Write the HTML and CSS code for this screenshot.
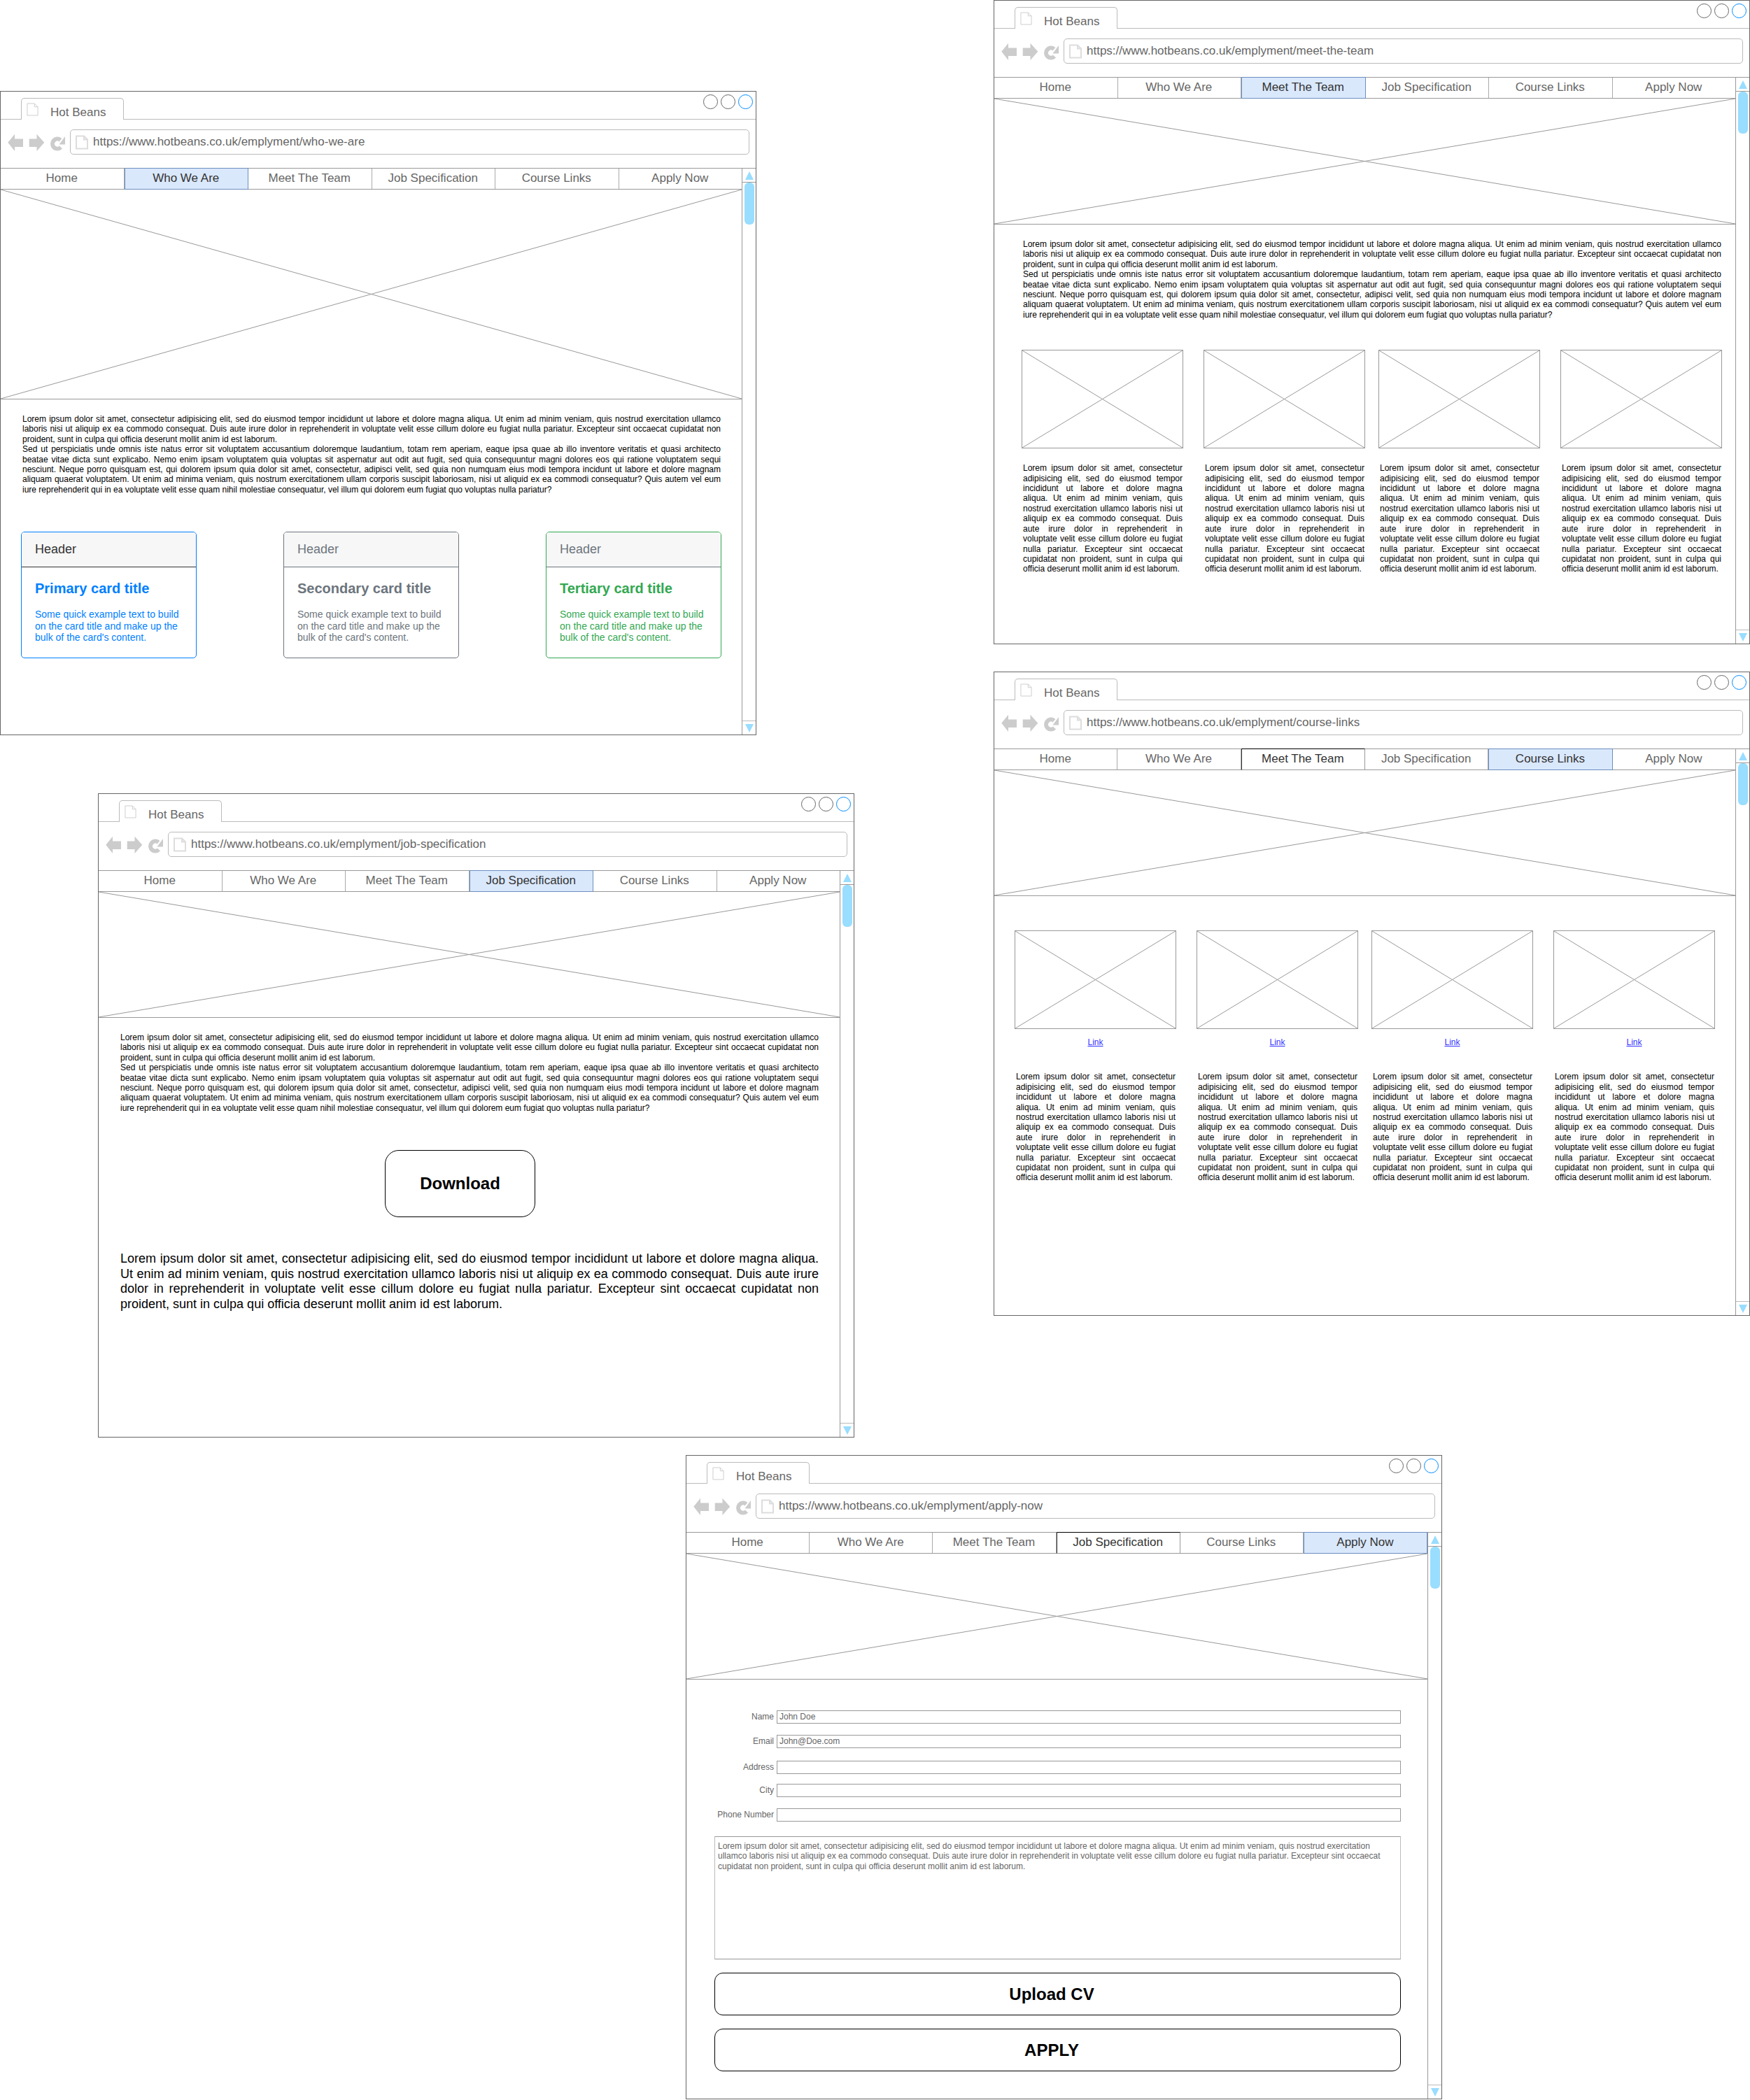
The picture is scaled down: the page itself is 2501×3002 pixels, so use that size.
FILE: index.html
```html
<!DOCTYPE html>
<html lang="en">
<head>
    <meta charset="UTF-8">
    <title>Hot Beans wireframes</title>
    <link rel="stylesheet" href="styles.css">
</head>
<body>
    <svg class="icon-defs" aria-hidden="true">
        <symbol id="nav-icons" viewBox="0 0 85 36">
            <path d="M1.3 18.8 11 6.7V13.5H23V25H11V31Z"/>
            <path d="M53.3 18.8 42.5 6.7V13.5H31.7V25H42.5V31Z"/>
            <path class="reload" d="M76.5 15.2A7 7 0 1 0 77 25.5"/>
            <path d="M83 10V21.5H74.5Z"/>
        </symbol>
        <symbol id="page" viewBox="0 0 18 20">
            <path d="M1 1H12L17 6V19H1Z M12 1V6H17"/>
        </symbol>
        <symbol id="cross" viewBox="0 0 100 100" preserveAspectRatio="none">
            <path d="M0 0 100 100M0 100 100 0" vector-effect="non-scaling-stroke"/>
        </symbol>
    </svg>

    <main class="desk">

        <!-- who we are -->
        <section class="window win-who">
            <div class="tab-row">
                <div class="tab"><svg class="tab-icon"><use href="#page"/></svg><span>Hot Beans</span></div>
                <div class="controls"><i></i><i></i><i class="on"></i></div>
            </div>
            <div class="toolbar">
                <svg class="nav-icons"><use href="#nav-icons"/></svg>
                <div class="address"><svg class="addr-icon"><use href="#page"/></svg>https://www.hotbeans.co.uk/emplyment/who-we-are</div>
            </div>
            <div class="frame">
                <div class="page">
                    <nav class="menu">
                        <a>Home</a><a class="active">Who We Are</a><a>Meet The Team</a><a>Job Specification</a><a>Course Links</a><a>Apply Now</a>
                    </nav>
                    <svg class="hero hero-tall"><use href="#cross"/></svg>
                    <div class="copy">
                        <p>Lorem ipsum dolor sit amet, consectetur adipisicing elit, sed do eiusmod tempor incididunt ut labore et dolore magna aliqua. Ut enim ad minim veniam, quis nostrud exercitation ullamco laboris nisi ut aliquip ex ea commodo consequat. Duis aute irure dolor in reprehenderit in voluptate velit esse cillum dolore eu fugiat nulla pariatur. Excepteur sint occaecat cupidatat non proident, sunt in culpa qui officia deserunt mollit anim id est laborum.</p>
                        <p>Sed ut perspiciatis unde omnis iste natus error sit voluptatem accusantium doloremque laudantium, totam rem aperiam, eaque ipsa quae ab illo inventore veritatis et quasi architecto beatae vitae dicta sunt explicabo. Nemo enim ipsam voluptatem quia voluptas sit aspernatur aut odit aut fugit, sed quia consequuntur magni dolores eos qui ratione voluptatem sequi nesciunt. Neque porro quisquam est, qui dolorem ipsum quia dolor sit amet, consectetur, adipisci velit, sed quia non numquam eius modi tempora incidunt ut labore et dolore magnam aliquam quaerat voluptatem. Ut enim ad minima veniam, quis nostrum exercitationem ullam corporis suscipit laboriosam, nisi ut aliquid ex ea commodi consequatur? Quis autem vel eum iure reprehenderit qui in ea voluptate velit esse quam nihil molestiae consequatur, vel illum qui dolorem eum fugiat quo voluptas nulla pariatur?</p>
                    </div>
                    <div class="cards">
                        <div class="card card-primary">
                            <div class="card-header">Header</div>
                            <div class="card-body">
                                <h4>Primary card title</h4>
                                <p>Some quick example text to build on the card title and make up the bulk of the card's content.</p>
                            </div>
                        </div>
                        <div class="card card-secondary">
                            <div class="card-header">Header</div>
                            <div class="card-body">
                                <h4>Secondary card title</h4>
                                <p>Some quick example text to build on the card title and make up the bulk of the card's content.</p>
                            </div>
                        </div>
                        <div class="card card-tertiary">
                            <div class="card-header">Header</div>
                            <div class="card-body">
                                <h4>Tertiary card title</h4>
                                <p>Some quick example text to build on the card title and make up the bulk of the card's content.</p>
                            </div>
                        </div>
                    </div>
                </div>
                <div class="scrollbar"><div class="scroll-up"><b></b></div><div class="thumb"></div><div class="scroll-down"><b></b></div></div>
            </div>
        </section>

        <!-- meet the team -->
        <section class="window win-team">
            <div class="tab-row">
                <div class="tab"><svg class="tab-icon"><use href="#page"/></svg><span>Hot Beans</span></div>
                <div class="controls"><i></i><i></i><i class="on"></i></div>
            </div>
            <div class="toolbar">
                <svg class="nav-icons"><use href="#nav-icons"/></svg>
                <div class="address"><svg class="addr-icon"><use href="#page"/></svg>https://www.hotbeans.co.uk/emplyment/meet-the-team</div>
            </div>
            <div class="frame">
                <div class="page">
                    <nav class="menu">
                        <a>Home</a><a>Who We Are</a><a class="active">Meet The Team</a><a>Job Specification</a><a>Course Links</a><a>Apply Now</a>
                    </nav>
                    <svg class="hero"><use href="#cross"/></svg>
                    <div class="copy">
                        <p>Lorem ipsum dolor sit amet, consectetur adipisicing elit, sed do eiusmod tempor incididunt ut labore et dolore magna aliqua. Ut enim ad minim veniam, quis nostrud exercitation ullamco laboris nisi ut aliquip ex ea commodo consequat. Duis aute irure dolor in reprehenderit in voluptate velit esse cillum dolore eu fugiat nulla pariatur. Excepteur sint occaecat cupidatat non proident, sunt in culpa qui officia deserunt mollit anim id est laborum.</p>
                        <p>Sed ut perspiciatis unde omnis iste natus error sit voluptatem accusantium doloremque laudantium, totam rem aperiam, eaque ipsa quae ab illo inventore veritatis et quasi architecto beatae vitae dicta sunt explicabo. Nemo enim ipsam voluptatem quia voluptas sit aspernatur aut odit aut fugit, sed quia consequuntur magni dolores eos qui ratione voluptatem sequi nesciunt. Neque porro quisquam est, qui dolorem ipsum quia dolor sit amet, consectetur, adipisci velit, sed quia non numquam eius modi tempora incidunt ut labore et dolore magnam aliquam quaerat voluptatem. Ut enim ad minima veniam, quis nostrum exercitationem ullam corporis suscipit laboriosam, nisi ut aliquid ex ea commodi consequatur? Quis autem vel eum iure reprehenderit qui in ea voluptate velit esse quam nihil molestiae consequatur, vel illum qui dolorem eum fugiat quo voluptas nulla pariatur?</p>
                    </div>
                    <div class="columns columns-team">
                        <div class="column"><svg class="thumb-img"><use href="#cross"/></svg><p>Lorem ipsum dolor sit amet, consectetur adipisicing elit, sed do eiusmod tempor incididunt ut labore et dolore magna aliqua. Ut enim ad minim veniam, quis nostrud exercitation ullamco laboris nisi ut aliquip ex ea commodo consequat. Duis aute irure dolor in reprehenderit in voluptate velit esse cillum dolore eu fugiat nulla pariatur. Excepteur sint occaecat cupidatat non proident, sunt in culpa qui officia deserunt mollit anim id est laborum.</p></div>
                        <div class="column"><svg class="thumb-img"><use href="#cross"/></svg><p>Lorem ipsum dolor sit amet, consectetur adipisicing elit, sed do eiusmod tempor incididunt ut labore et dolore magna aliqua. Ut enim ad minim veniam, quis nostrud exercitation ullamco laboris nisi ut aliquip ex ea commodo consequat. Duis aute irure dolor in reprehenderit in voluptate velit esse cillum dolore eu fugiat nulla pariatur. Excepteur sint occaecat cupidatat non proident, sunt in culpa qui officia deserunt mollit anim id est laborum.</p></div>
                        <div class="column"><svg class="thumb-img"><use href="#cross"/></svg><p>Lorem ipsum dolor sit amet, consectetur adipisicing elit, sed do eiusmod tempor incididunt ut labore et dolore magna aliqua. Ut enim ad minim veniam, quis nostrud exercitation ullamco laboris nisi ut aliquip ex ea commodo consequat. Duis aute irure dolor in reprehenderit in voluptate velit esse cillum dolore eu fugiat nulla pariatur. Excepteur sint occaecat cupidatat non proident, sunt in culpa qui officia deserunt mollit anim id est laborum.</p></div>
                        <div class="column"><svg class="thumb-img"><use href="#cross"/></svg><p>Lorem ipsum dolor sit amet, consectetur adipisicing elit, sed do eiusmod tempor incididunt ut labore et dolore magna aliqua. Ut enim ad minim veniam, quis nostrud exercitation ullamco laboris nisi ut aliquip ex ea commodo consequat. Duis aute irure dolor in reprehenderit in voluptate velit esse cillum dolore eu fugiat nulla pariatur. Excepteur sint occaecat cupidatat non proident, sunt in culpa qui officia deserunt mollit anim id est laborum.</p></div>
                    </div>
                </div>
                <div class="scrollbar"><div class="scroll-up"><b></b></div><div class="thumb"></div><div class="scroll-down"><b></b></div></div>
            </div>
        </section>

        <!-- course links -->
        <section class="window win-links">
            <div class="tab-row">
                <div class="tab"><svg class="tab-icon"><use href="#page"/></svg><span>Hot Beans</span></div>
                <div class="controls"><i></i><i></i><i class="on"></i></div>
            </div>
            <div class="toolbar">
                <svg class="nav-icons"><use href="#nav-icons"/></svg>
                <div class="address"><svg class="addr-icon"><use href="#page"/></svg>https://www.hotbeans.co.uk/emplyment/course-links</div>
            </div>
            <div class="frame">
                <div class="page">
                    <nav class="menu">
                        <a>Home</a><a>Who We Are</a><a class="picked">Meet The Team</a><a>Job Specification</a><a class="active">Course Links</a><a>Apply Now</a>
                    </nav>
                    <svg class="hero"><use href="#cross"/></svg>
                    <div class="columns columns-links">
                        <div class="column"><svg class="thumb-img"><use href="#cross"/></svg><a class="course-link" href="#">Link</a><p>Lorem ipsum dolor sit amet, consectetur adipisicing elit, sed do eiusmod tempor incididunt ut labore et dolore magna aliqua. Ut enim ad minim veniam, quis nostrud exercitation ullamco laboris nisi ut aliquip ex ea commodo consequat. Duis aute irure dolor in reprehenderit in voluptate velit esse cillum dolore eu fugiat nulla pariatur. Excepteur sint occaecat cupidatat non proident, sunt in culpa qui officia deserunt mollit anim id est laborum.</p></div>
                        <div class="column"><svg class="thumb-img"><use href="#cross"/></svg><a class="course-link" href="#">Link</a><p>Lorem ipsum dolor sit amet, consectetur adipisicing elit, sed do eiusmod tempor incididunt ut labore et dolore magna aliqua. Ut enim ad minim veniam, quis nostrud exercitation ullamco laboris nisi ut aliquip ex ea commodo consequat. Duis aute irure dolor in reprehenderit in voluptate velit esse cillum dolore eu fugiat nulla pariatur. Excepteur sint occaecat cupidatat non proident, sunt in culpa qui officia deserunt mollit anim id est laborum.</p></div>
                        <div class="column"><svg class="thumb-img"><use href="#cross"/></svg><a class="course-link" href="#">Link</a><p>Lorem ipsum dolor sit amet, consectetur adipisicing elit, sed do eiusmod tempor incididunt ut labore et dolore magna aliqua. Ut enim ad minim veniam, quis nostrud exercitation ullamco laboris nisi ut aliquip ex ea commodo consequat. Duis aute irure dolor in reprehenderit in voluptate velit esse cillum dolore eu fugiat nulla pariatur. Excepteur sint occaecat cupidatat non proident, sunt in culpa qui officia deserunt mollit anim id est laborum.</p></div>
                        <div class="column"><svg class="thumb-img"><use href="#cross"/></svg><a class="course-link" href="#">Link</a><p>Lorem ipsum dolor sit amet, consectetur adipisicing elit, sed do eiusmod tempor incididunt ut labore et dolore magna aliqua. Ut enim ad minim veniam, quis nostrud exercitation ullamco laboris nisi ut aliquip ex ea commodo consequat. Duis aute irure dolor in reprehenderit in voluptate velit esse cillum dolore eu fugiat nulla pariatur. Excepteur sint occaecat cupidatat non proident, sunt in culpa qui officia deserunt mollit anim id est laborum.</p></div>
                    </div>
                </div>
                <div class="scrollbar"><div class="scroll-up"><b></b></div><div class="thumb"></div><div class="scroll-down"><b></b></div></div>
            </div>
        </section>

        <!-- job specification -->
        <section class="window win-job">
            <div class="tab-row">
                <div class="tab"><svg class="tab-icon"><use href="#page"/></svg><span>Hot Beans</span></div>
                <div class="controls"><i></i><i></i><i class="on"></i></div>
            </div>
            <div class="toolbar">
                <svg class="nav-icons"><use href="#nav-icons"/></svg>
                <div class="address"><svg class="addr-icon"><use href="#page"/></svg>https://www.hotbeans.co.uk/emplyment/job-specification</div>
            </div>
            <div class="frame">
                <div class="page">
                    <nav class="menu">
                        <a>Home</a><a>Who We Are</a><a>Meet The Team</a><a class="active">Job Specification</a><a>Course Links</a><a>Apply Now</a>
                    </nav>
                    <svg class="hero"><use href="#cross"/></svg>
                    <div class="copy">
                        <p>Lorem ipsum dolor sit amet, consectetur adipisicing elit, sed do eiusmod tempor incididunt ut labore et dolore magna aliqua. Ut enim ad minim veniam, quis nostrud exercitation ullamco laboris nisi ut aliquip ex ea commodo consequat. Duis aute irure dolor in reprehenderit in voluptate velit esse cillum dolore eu fugiat nulla pariatur. Excepteur sint occaecat cupidatat non proident, sunt in culpa qui officia deserunt mollit anim id est laborum.</p>
                        <p>Sed ut perspiciatis unde omnis iste natus error sit voluptatem accusantium doloremque laudantium, totam rem aperiam, eaque ipsa quae ab illo inventore veritatis et quasi architecto beatae vitae dicta sunt explicabo. Nemo enim ipsam voluptatem quia voluptas sit aspernatur aut odit aut fugit, sed quia consequuntur magni dolores eos qui ratione voluptatem sequi nesciunt. Neque porro quisquam est, qui dolorem ipsum quia dolor sit amet, consectetur, adipisci velit, sed quia non numquam eius modi tempora incidunt ut labore et dolore magnam aliquam quaerat voluptatem. Ut enim ad minima veniam, quis nostrum exercitationem ullam corporis suscipit laboriosam, nisi ut aliquid ex ea commodi consequatur? Quis autem vel eum iure reprehenderit qui in ea voluptate velit esse quam nihil molestiae consequatur, vel illum qui dolorem eum fugiat quo voluptas nulla pariatur?</p>
                    </div>
                    <button class="btn btn-download">Download</button>
                    <p class="copy-large">Lorem ipsum dolor sit amet, consectetur adipisicing elit, sed do eiusmod tempor incididunt ut labore et dolore magna aliqua. Ut enim ad minim veniam, quis nostrud exercitation ullamco laboris nisi ut aliquip ex ea commodo consequat. Duis aute irure dolor in reprehenderit in voluptate velit esse cillum dolore eu fugiat nulla pariatur. Excepteur sint occaecat cupidatat non proident, sunt in culpa qui officia deserunt mollit anim id est laborum.</p>
                </div>
                <div class="scrollbar"><div class="scroll-up"><b></b></div><div class="thumb"></div><div class="scroll-down"><b></b></div></div>
            </div>
        </section>

        <!-- apply now -->
        <section class="window win-apply">
            <div class="tab-row">
                <div class="tab"><svg class="tab-icon"><use href="#page"/></svg><span>Hot Beans</span></div>
                <div class="controls"><i></i><i></i><i class="on"></i></div>
            </div>
            <div class="toolbar">
                <svg class="nav-icons"><use href="#nav-icons"/></svg>
                <div class="address"><svg class="addr-icon"><use href="#page"/></svg>https://www.hotbeans.co.uk/emplyment/apply-now</div>
            </div>
            <div class="frame">
                <div class="page">
                    <nav class="menu">
                        <a>Home</a><a>Who We Are</a><a>Meet The Team</a><a class="picked">Job Specification</a><a>Course Links</a><a class="active">Apply Now</a>
                    </nav>
                    <svg class="hero"><use href="#cross"/></svg>
                    <form class="apply-form">
                        <label class="field gap-16"><span>Name</span><input type="text" value="John Doe"></label>
                        <label class="field gap-18"><span>Email</span><input type="text" value="John@Doe.com"></label>
                        <label class="field gap-14"><span>Address</span><input type="text"></label>
                        <label class="field gap-16"><span>City</span><input type="text"></label>
                        <label class="field gap-21"><span>Phone Number</span><input type="text"></label>
                        <textarea class="cover-note">Lorem ipsum dolor sit amet, consectetur adipisicing elit, sed do eiusmod tempor incididunt ut labore et dolore magna aliqua. Ut enim ad minim veniam, quis nostrud exercitation ullamco laboris nisi ut aliquip ex ea commodo consequat. Duis aute irure dolor in reprehenderit in voluptate velit esse cillum dolore eu fugiat nulla pariatur. Excepteur sint occaecat cupidatat non proident, sunt in culpa qui officia deserunt mollit anim id est laborum.</textarea>
                        <button type="button" class="btn btn-wide">Upload CV</button>
                        <button type="button" class="btn btn-wide">APPLY</button>
                    </form>
                </div>
                <div class="scrollbar"><div class="scroll-up"><b></b></div><div class="thumb"></div><div class="scroll-down"><b></b></div></div>
            </div>
        </section>

    </main>
</body>
</html>
```

FILE: styles.css
```css
* {
    box-sizing: border-box;
}

body {
    margin: 0;
    background: #fff;
    color: #000;
    font-family: "Liberation Sans", Arial, sans-serif;
}

.icon-defs {
    position: absolute;
    width: 0;
    height: 0;
}

.desk {
    position: relative;
    width: 2501px;
    height: 3002px;
    overflow: hidden;
}

/* windows sit freely on the canvas */
.window {
    position: absolute;
    width: 1081px;
    height: 921px;
    display: flex;
    flex-direction: column;
    background: #fff;
    border: 1px solid #666;
}

.win-who { left: 0; top: 130px; }
.win-team { left: 1420px; top: 0; }
.win-links { left: 1420px; top: 960px; }
.win-job { left: 140px; top: 1134px; }
.win-apply { left: 980px; top: 2080px; }

/* title bar */
.tab-row {
    display: flex;
    height: 40px;
    flex: none;
    border-bottom: 1px solid #bbb;
}

.tab {
    display: flex;
    align-items: flex-start;
    width: 147px;
    height: 31px;
    margin: 9px 0 0 29px;
    padding: 6px 0 0 7px;
    background: #fff;
    border: 1px solid #bbb;
    border-bottom: 0;
    border-radius: 5px 5px 0 0;
    color: #666;
    font-size: 17px;
}

.tab-icon {
    width: 17px;
    height: 19px;
    margin-right: 17px;
    fill: none;
    stroke: #ccc;
    stroke-width: 1;
}

.tab span {
    line-height: 24px;
    margin-top: 2px;
}

.controls {
    display: flex;
    gap: 4px;
    margin: 4px 4px 0 auto;
}

.controls i {
    display: block;
    width: 21px;
    height: 21px;
    border: 1px solid #666;
    border-radius: 50%;
}

.controls i.on {
    border-color: #008cff;
}

/* address bar */
.toolbar {
    display: flex;
    height: 69px;
    flex: none;
    padding: 14px 9px 0 9px;
}

.nav-icons {
    width: 85px;
    height: 36px;
    margin-right: 5px;
    fill: #ccc;
}

.reload {
    fill: none;
    stroke: #ccc;
    stroke-width: 6;
}

.address {
    display: flex;
    align-items: center;
    flex: 1;
    height: 36px;
    padding-left: 7px;
    border: 1px solid #bbb;
    border-radius: 5px;
    color: #666;
    font-size: 17px;
}

.addr-icon {
    width: 18px;
    height: 21px;
    margin-right: 7px;
    fill: none;
    stroke: #ddd;
    stroke-width: 2;
}

/* page + scrollbar */
.frame {
    display: flex;
    flex: 1;
    min-height: 0;
}

.page {
    width: 1059px;
    flex: none;
}

.scrollbar {
    display: flex;
    flex-direction: column;
    width: 20px;
    flex: none;
    border-top: 1px solid #999;
    border-left: 1px solid #999;
}

.scroll-up,
.scroll-down {
    display: flex;
    justify-content: center;
    align-items: center;
    height: 20px;
    flex: none;
}

.scroll-up {
    border-bottom: 1px solid #999;
}

.scroll-down {
    margin-top: auto;
    border-top: 1px solid #bbb;
}

.scroll-up b,
.scroll-down b {
    width: 0;
    height: 0;
    border-left: 6px solid transparent;
    border-right: 6px solid transparent;
}

.scroll-up b {
    border-bottom: 12px solid #99ddff;
}

.scroll-down b {
    border-top: 12px solid #99ddff;
}

.thumb {
    width: 14px;
    height: 60px;
    margin-left: 3px;
    background: #99ddff;
    border-radius: 6px;
}

/* menu */
.menu {
    display: flex;
    height: 31px;
    border-top: 1px solid #999;
    border-bottom: 1px solid #999;
}

.menu a {
    display: flex;
    align-items: center;
    justify-content: center;
    flex: 1;
    padding: 0 1px 2px 0;
    border-right: 1px solid #aaa;
    color: #666;
    font-size: 17px;
}

.menu a:last-child {
    border-right: 0;
}

.menu a.active {
    margin: -1px 0;
    background: #dae8fc;
    border: 1px solid #6c8ebf;
    color: #333;
}

.menu a.picked {
    margin: -1px 0;
    border: 1px solid #333;
    border-top-color: #000;
    border-bottom-color: #999;
    border-right-color: #999;
    color: #333;
}

.hero {
    display: block;
    width: 1059px;
    height: 180px;
    fill: none;
    stroke: #999;
    border-bottom: 1px solid #999;
}

.hero-tall {
    height: 300px;
}

/* text */
.copy {
    width: 998px;
    margin: 21px 0 0 31px;
    font-size: 12px;
    line-height: 14.4px;
    text-align: justify;
}

.copy p {
    margin: 0;
}

.win-team .copy {
    margin-left: 41px;
}

.copy-large {
    width: 998px;
    margin: 49px 0 0 31px;
    font-size: 18px;
    line-height: 21.6px;
    text-align: justify;
}

/* cards */
.cards {
    display: flex;
    gap: 124px;
    margin: 53px 0 0 29px;
}

.card {
    width: 251px;
    height: 181px;
    border: 1px solid;
    border-radius: 5px;
    overflow: hidden;
}

.card-header {
    height: 50px;
    padding: 14px 19px 0;
    background: #f7f7f7;
    border-bottom: 1px solid;
    font-size: 18px;
    line-height: 20px;
}

.card-body {
    padding: 18px 19px 0;
}

.card-body h4 {
    margin: 0 0 17px;
    font-size: 20px;
    line-height: 24px;
}

.card-body p {
    margin: 0;
    font-size: 14px;
    line-height: 16.4px;
}

.card-primary {
    border-color: #007fff;
    color: #007fff;
}

.card-primary .card-header {
    color: #333;
}

.card-secondary {
    border-color: #6c757d;
    color: #6c757d;
}

.card-tertiary {
    border-color: #33a852;
    color: #33a852;
}

.card-tertiary .card-header {
    color: #6c757d;
}

/* image + text columns */
.columns {
    display: grid;
    grid-template-columns: 260px 250px 260px 231px;
}

.columns-team {
    margin: 43px 0 0 39px;
}

.columns-links {
    margin: 49px 0 0 29px;
}

.column {
    width: 231px;
}

.thumb-img {
    display: block;
    width: 231px;
    height: 141px;
    fill: none;
    stroke: #999;
    border: 1px solid #999;
}

.column p {
    width: 228px;
    margin: 21px 0 0 2px;
    font-size: 12px;
    line-height: 14.4px;
    text-align: justify;
}

.course-link {
    display: block;
    margin-top: 12px;
    color: #3333ff;
    font-size: 12px;
    line-height: 14.4px;
    text-align: center;
}

.course-link + p {
    margin-top: 35px;
}

/* buttons */
.btn {
    display: block;
    background: #fff;
    border: 1px solid #000;
    color: #000;
    font-family: inherit;
    font-size: 24px;
    font-weight: bold;
}

.btn-download {
    width: 215px;
    height: 96px;
    margin: 53px 0 0 409px;
    border-radius: 20px;
}

.btn-wide {
    width: 981px;
    height: 61px;
    margin-bottom: 19px;
    padding-right: 23px;
    border-radius: 12px;
}

/* form */
.apply-form {
    padding: 44px 0 0 40px;
}

.field {
    display: flex;
    align-items: center;
    width: 981px;
    height: 19px;
    padding-bottom: 1px;
    color: #666;
    font-size: 12px;
}

.field span {
    margin-left: -40px;
    padding-right: 2px;
    flex: 1 0 127px;
    text-align: right;
    white-space: nowrap;
}

.field input {
    width: 892px;
    height: 19px;
    flex: none;
    margin: 0 0 -1px 2px;
    padding: 0 3px 1px;
    background: #fff;
    border: 1px solid #999;
    border-radius: 0;
    color: #666;
    font: 12px "Liberation Sans", Arial, sans-serif;
}

.gap-14 { margin-bottom: 14px; }
.gap-16 { margin-bottom: 16px; }
.gap-18 { margin-bottom: 18px; }
.gap-21 { margin-bottom: 21px; }

.cover-note {
    display: block;
    width: 981px;
    height: 176px;
    margin: 0 0 19px;
    padding: 6px 4px;
    background: #fff;
    border: 1px solid #999;
    border-left-color: #bbb;
    border-right-color: #bbb;
    border-radius: 0;
    color: #666;
    font: 12px/14.4px "Liberation Sans", Arial, sans-serif;
    resize: none;
    overflow: hidden;
}
```
